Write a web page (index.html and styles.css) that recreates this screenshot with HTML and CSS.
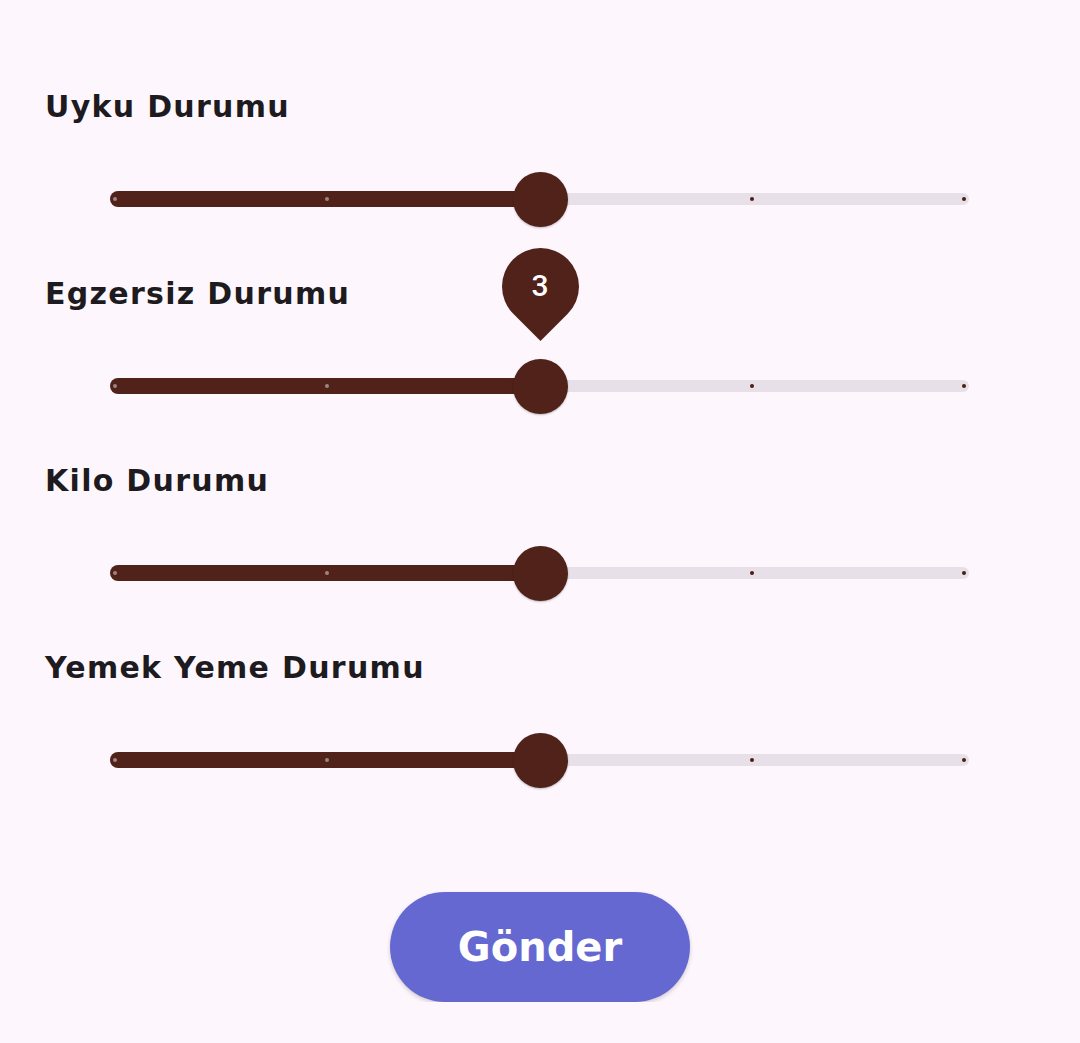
FILE: index.html
```html
<!DOCTYPE html>
<html lang="tr">
<head>
<meta charset="utf-8">
<title>Durum</title>
<link rel="stylesheet" href="styles.css">
</head>
<body>
<main class="form">
  <section class="field">
    <h2 class="label">Uyku Durumu</h2>
    <div class="slider">
      <div class="rail">
        <div class="active" style="flex-basis: 430px"></div>
        <div class="inactive"></div>
      </div>
      <div class="ticks"><i class="on"></i><i class="on"></i><i></i><i></i><i></i></div>
      <div class="thumb" style="left: 430px"></div>
    </div>
  </section>
  <section class="field">
    <h2 class="label">Egzersiz Durumu</h2>
    <div class="slider">
      <div class="rail">
        <div class="active" style="flex-basis: 430px"></div>
        <div class="inactive"></div>
      </div>
      <div class="ticks"><i class="on"></i><i class="on"></i><i></i><i></i><i></i></div>
      <div class="thumb" style="left: 430px"></div>
      <div class="bubble" style="left: 430px"><span class="drop"></span><span class="value">3</span></div>
    </div>
  </section>
  <section class="field">
    <h2 class="label">Kilo Durumu</h2>
    <div class="slider">
      <div class="rail">
        <div class="active" style="flex-basis: 430px"></div>
        <div class="inactive"></div>
      </div>
      <div class="ticks"><i class="on"></i><i class="on"></i><i></i><i></i><i></i></div>
      <div class="thumb" style="left: 430px"></div>
    </div>
  </section>
  <section class="field">
    <h2 class="label">Yemek Yeme Durumu</h2>
    <div class="slider">
      <div class="rail">
        <div class="active" style="flex-basis: 430px"></div>
        <div class="inactive"></div>
      </div>
      <div class="ticks"><i class="on"></i><i class="on"></i><i></i><i></i><i></i></div>
      <div class="thumb" style="left: 430px"></div>
    </div>
  </section>
  <div class="actions">
    <button class="submit" type="button">Gönder</button>
  </div>
</main>
</body>
</html>
```
FILE: styles.css
```css
html, body {
  margin: 0;
  padding: 0;
  background: #FDF7FD;
}
body {
  font-family: "DejaVu Sans", "Noto Sans", sans-serif;
  color: #1D1B20;
}
.form {
  display: flex;
  flex-direction: column;
  gap: 45px;
  padding-top: 85px;
}
.field {
  display: flex;
  flex-direction: column;
}
.label {
  margin: 0;
  padding: 2px 0 0 45px;
  font-size: 30px;
  line-height: 40px;
  font-weight: 700;
  letter-spacing: 1.3px;
  height: 40px;
}
.slider {
  position: relative;
  height: 56px;
  margin: 44px 111px 0 110px;
}
.rail {
  display: flex;
  align-items: center;
  height: 56px;
}
.active {
  flex: 0 0 auto;
  height: 16px;
  background: #51221A;
  border-radius: 8px 0 0 8px;
}
.inactive {
  flex: 1;
  height: 12px;
  background: #E7E0E8;
  border-radius: 0 6px 6px 0;
}
.ticks {
  position: absolute;
  left: 3px;
  right: 3px;
  top: 26px;
  display: flex;
  justify-content: space-between;
}
.ticks i {
  width: 4px;
  height: 4px;
  border-radius: 50%;
  background: #4A1D16;
}
.ticks i.on {
  background: #A08380;
}
.thumb {
  position: absolute;
  top: 0.5px;
  width: 55px;
  height: 55px;
  margin-left: -27.5px;
  border-radius: 50%;
  background: #51221A;
  box-shadow: 0 1px 2px rgba(0,0,0,0.25);
}
.bubble {
  position: absolute;
  top: -110px;
  width: 77px;
  height: 77px;
  margin-left: -38.5px;
  display: flex;
  align-items: center;
  justify-content: center;
}
.drop {
  position: absolute;
  inset: 0;
  background: #51221A;
  border-radius: 50% 50% 0 50%;
  transform: rotate(45deg);
}
.value {
  position: relative;
  color: #FFFFFF;
  font-family: "Roboto", sans-serif;
  font-weight: 500;
  font-size: 30px;
  line-height: 1;
  margin-top: -2px;
}
.actions {
  display: flex;
  justify-content: center;
  padding-top: 59px;
}
.submit {
  width: 300px;
  height: 110px;
  border: 0;
  border-radius: 55px;
  background: #6568D0;
  color: #FFFFFF;
  font-family: "DejaVu Sans", "Noto Sans", sans-serif;
  font-weight: 700;
  font-size: 40px;
  letter-spacing: 0;
  box-shadow: 0 2px 4px rgba(0,0,0,0.18);
  padding: 0;
}
```
